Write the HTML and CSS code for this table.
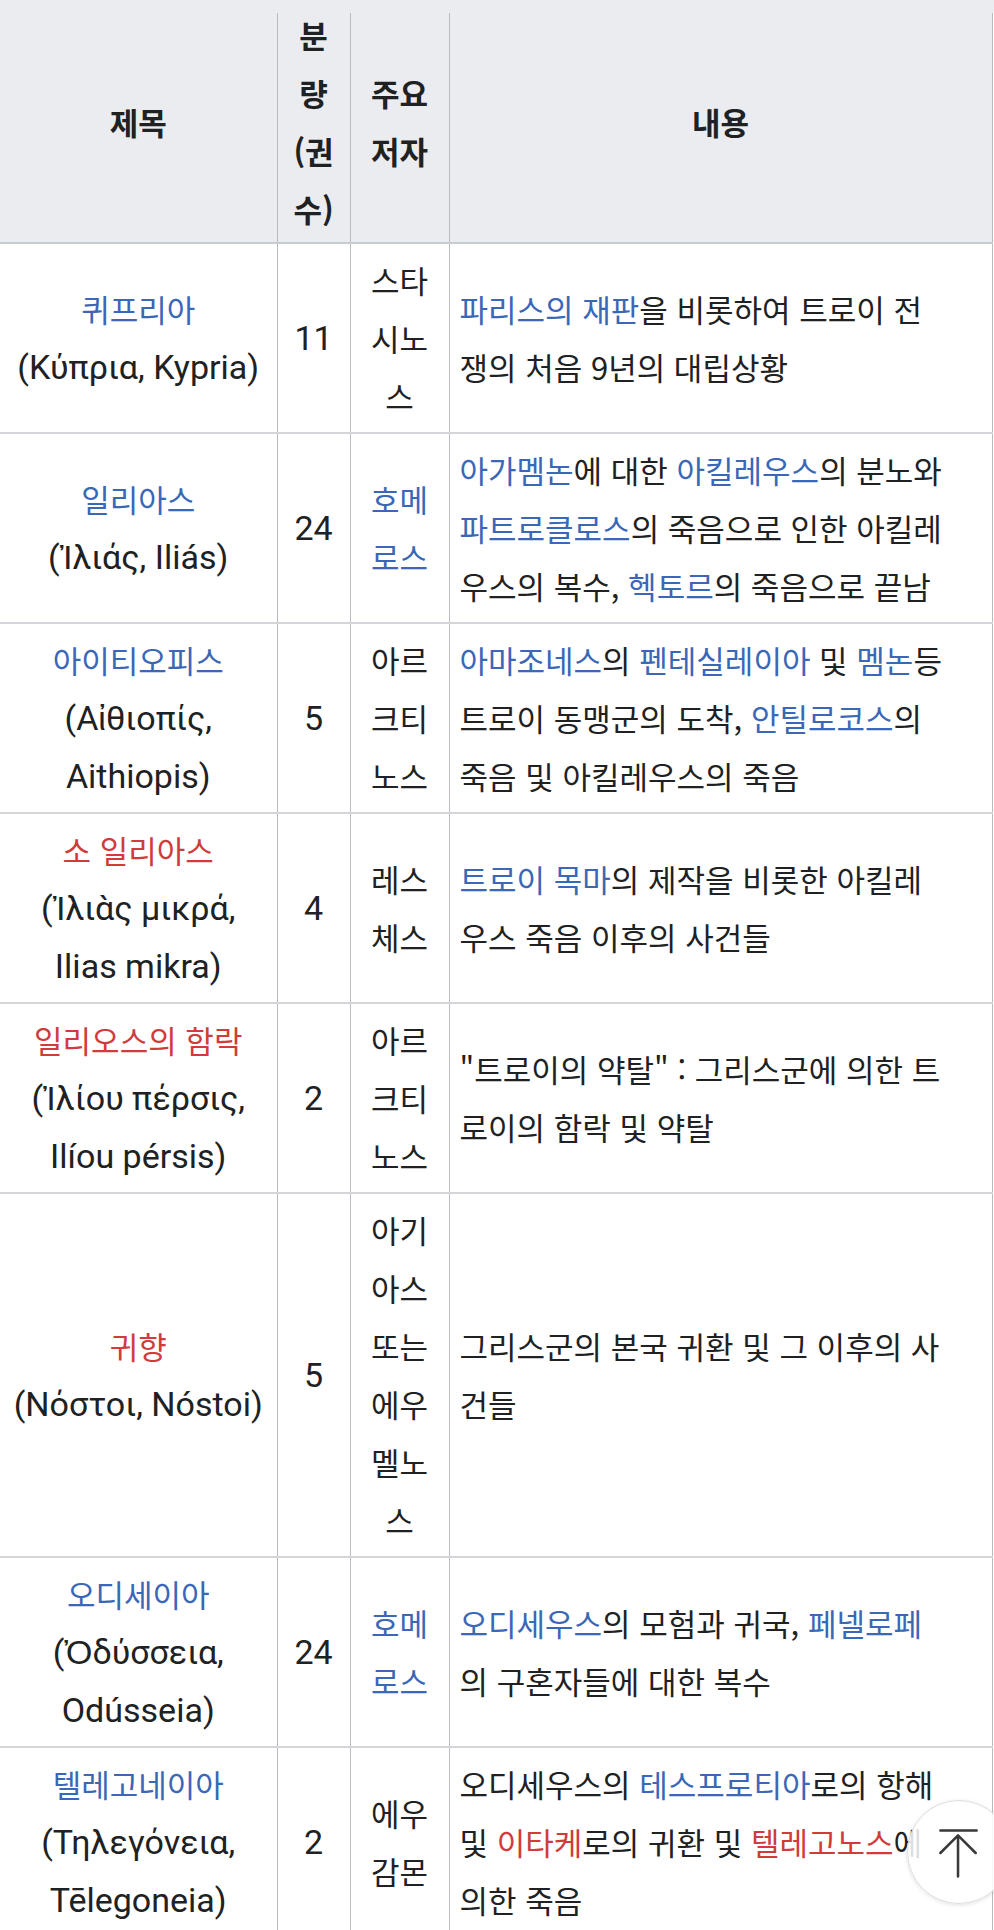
FILE: index.html
```html
<!DOCTYPE html>
<html lang="ko">
<head>
<meta charset="utf-8">
<title>서사시권</title>
<link rel="stylesheet" href="styles.css">
</head>
<body>
<div class="page">
  <table class="wikitable">
    <colgroup>
      <col class="c-title">
      <col class="c-vol">
      <col class="c-author">
      <col class="c-content">
    </colgroup>
    <thead>
      <tr>
        <th>제목</th>
        <th>분량 (권수)</th>
        <th>주요 저자</th>
        <th>내용</th>
      </tr>
    </thead>
    <tbody>
      <tr>
        <td class="title"><a class="ln">퀴프리아</a><span class="lat">(Κύπρια, Kypria)</span></td>
        <td class="num">11</td>
        <td class="author">스타시노스</td>
        <td class="content"><a class="ln">파리스의 재판</a>을 비롯하여 트로이 전<br>쟁의 처음 9년의 대립상황</td>
      </tr>
      <tr>
        <td class="title"><a class="ln">일리아스</a><span class="lat">(Ἰλιάς, Iliás)</span></td>
        <td class="num">24</td>
        <td class="author"><a class="ln">호메로스</a></td>
        <td class="content"><a class="ln">아가멤논</a>에 대한 <a class="ln">아킬레우스</a>의 분노와<br><a class="ln">파트로클로스</a>의 죽음으로 인한 아킬레<br>우스의 복수, <a class="ln">헥토르</a>의 죽음으로 끝남</td>
      </tr>
      <tr>
        <td class="title"><a class="ln">아이티오피스</a><span class="lat">(Αἰθιοπίς,<br>Aithiopis)</span></td>
        <td class="num">5</td>
        <td class="author">아르크티노스</td>
        <td class="content"><a class="ln">아마조네스</a>의 <a class="ln">펜테실레이아</a> 및 <a class="ln">멤논</a>등<br>트로이 동맹군의 도착, <a class="ln">안틸로코스</a>의<br>죽음 및 아킬레우스의 죽음</td>
      </tr>
      <tr>
        <td class="title"><a class="ln new">소 일리아스</a><span class="lat">(Ἰλιὰς μικρά,<br>Ilias mikra)</span></td>
        <td class="num">4</td>
        <td class="author">레스체스</td>
        <td class="content"><a class="ln">트로이 목마</a>의 제작을 비롯한 아킬레<br>우스 죽음 이후의 사건들</td>
      </tr>
      <tr>
        <td class="title"><a class="ln new">일리오스의 함락</a><span class="lat">(Ἰλίου πέρσις,<br>Ilíou pérsis)</span></td>
        <td class="num">2</td>
        <td class="author">아르크티노스</td>
        <td class="content">"트로이의 약탈" : 그리스군에 의한 트<br>로이의 함락 및 약탈</td>
      </tr>
      <tr>
        <td class="title"><a class="ln new">귀향</a><span class="lat">(Νόστοι, Nóstoi)</span></td>
        <td class="num">5</td>
        <td class="author">아기아스 또는 에우멜노스</td>
        <td class="content">그리스군의 본국 귀환 및 그 이후의 사<br>건들</td>
      </tr>
      <tr>
        <td class="title"><a class="ln">오디세이아</a><span class="lat">(Ὀδύσσεια,<br>Odússeia)</span></td>
        <td class="num">24</td>
        <td class="author"><a class="ln">호메로스</a></td>
        <td class="content"><a class="ln">오디세우스</a>의 모험과 귀국, <a class="ln">페넬로페</a><br>의 구혼자들에 대한 복수</td>
      </tr>
      <tr>
        <td class="title"><a class="ln">텔레고네이아</a><span class="lat">(Τηλεγόνεια,<br>Tēlegoneia)</span></td>
        <td class="num">2</td>
        <td class="author">에우감몬</td>
        <td class="content">오디세우스의 <a class="ln">테스프로티아</a>로의 항해<br>및 <a class="ln new">이타케</a>로의 귀환 및 <a class="ln new">텔레고노스</a>에<br>의한 죽음</td>
      </tr>
    </tbody>
  </table>
  <div class="top-band"></div>
</div>
<button class="to-top" type="button" aria-label="맨 위로">
  <svg width="104" height="104" viewBox="0 0 104 104" aria-hidden="true">
    <path d="M33 30 H70 M51 36 V77 M33 53 L51 35 L69 53" fill="none" stroke="#3a3a3a" stroke-width="2.6" stroke-linecap="round" stroke-linejoin="round"/>
  </svg>
</button>
</body>
</html>
```

FILE: styles.css
```css
html, body {
  margin: 0;
  padding: 0;
  background: #ffffff;
}

body {
  color: #202122;
  font-family: "Noto Sans CJK KR", sans-serif;
  font-size: 31px;
  line-height: 58px;
}

.page {
  position: relative;
}

.top-band {
  position: absolute;
  top: 0;
  left: 0;
  width: 994px;
  height: 13px;
  background: #eaecf0;
}

.wikitable {
  border-collapse: collapse;
  table-layout: fixed;
  width: 992px;
}

.c-title { width: 277px; }
.c-vol { width: 73px; }
.c-author { width: 99px; }
.c-content { width: 543px; }

.wikitable th,
.wikitable td {
  border-left: 1px solid #b8bbc0;
  border-right: 1px solid #b8bbc0;
  border-bottom: 2px solid #d3d5d9;
  padding: 7px 10px;
  vertical-align: middle;
}

.wikitable tr > :first-child {
  border-left: none;
}

.wikitable th {
  background: #eaecf0;
  font-weight: 700;
  padding: 6px 10px 4px;
  border-bottom: 2px solid #c8ccd1;
}

.title {
  text-align: center;
  white-space: nowrap;
}

.wikitable td.title {
  padding-left: 4px;
  padding-right: 4px;
}

.title .ln,
.title .lat {
  display: block;
}

.lat {
  font-family: Roboto, sans-serif;
  font-size: 34px;
}

.num {
  text-align: center;
  font-family: Roboto, sans-serif;
  font-size: 34px;
}

.author {
  text-align: center;
}

.content {
  white-space: nowrap;
}

.ln {
  color: #3a67b6;
  text-decoration: none;
}

.ln.new {
  color: #d03b3b;
}

.to-top {
  position: fixed;
  left: 907px;
  top: 1800px;
  width: 104px;
  height: 104px;
  padding: 0;
  border: 1px solid #dcdcdc;
  border-radius: 50%;
  background: rgba(255, 255, 255, 0.85);
  box-shadow: 0 1px 4px rgba(0, 0, 0, 0.12);
  display: flex;
  align-items: center;
  justify-content: center;
}

.to-top svg {
  display: block;
}
```
